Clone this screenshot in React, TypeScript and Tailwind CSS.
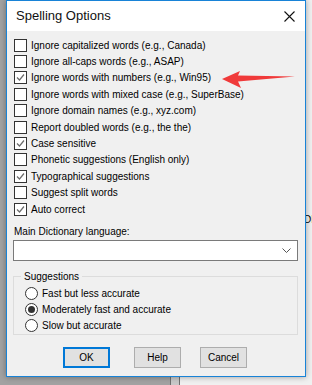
import React from "react";

const options: [string, boolean][] = [
  ["Ignore capitalized words (e.g., Canada)", false],
  ["Ignore all-caps words (e.g., ASAP)", false],
  ["Ignore words with numbers (e.g., Win95)", true],
  ["Ignore words with mixed case (e.g., SuperBase)", false],
  ["Ignore domain names (e.g., xyz.com)", false],
  ["Report doubled words (e.g., the the)", false],
  ["Case sensitive", true],
  ["Phonetic suggestions (English only)", false],
  ["Typographical suggestions", true],
  ["Suggest split words", false],
  ["Auto correct", true],
];

const radios: [string, boolean][] = [
  ["Fast but less accurate", false],
  ["Moderately fast and accurate", true],
  ["Slow but accurate", false],
];

function CheckBox({ checked }: { checked: boolean }) {
  return (
    <div className="w-[13px] h-[13px] border border-[#333] bg-white flex items-center justify-center shrink-0">
      {checked && (
        <svg width="11" height="11" viewBox="0 0 11 11">
          <path d="M2 5.5 L4.5 8 L9 2.5" fill="none" stroke="#6b6b6b" strokeWidth="1.2" />
        </svg>
      )}
    </div>
  );
}

function Radio({ checked }: { checked: boolean }) {
  return (
    <div className="w-[13px] h-[13px] rounded-full border border-[#333] bg-white flex items-center justify-center shrink-0">
      {checked && <div className="w-[7px] h-[7px] rounded-full bg-[#333]" />}
    </div>
  );
}

export default function App() {
  return (
    <div
      className="relative w-[312px] h-[385px] overflow-hidden flex text-[10px] text-black"
      style={{ fontFamily: '"Liberation Sans", Arial, sans-serif' }}
    >
      {/* Desktop behind the window */}
      <div className="w-[170px] h-full bg-[#a2a2a2]" />
      <div className="w-[10px] h-full bg-[#c8c8c8] border-l border-r border-[#707070]" />
      <div className="flex-1 h-full bg-[#f0f0f0] relative">
        <div className="absolute left-[124px] top-[212px] text-[10px]">DI</div>
      </div>

      {/* Dialog window */}
      <div className="absolute left-[6px] top-0 w-[300px] h-[377px] border border-[#1883d7] bg-[#f0f0f0] shadow-[0_0_6px_rgba(0,0,0,0.35)] flex flex-col">
        {/* Title bar */}
        <div className="h-[30px] bg-white flex items-center justify-between pl-[9px] pr-[10px] shrink-0">
          <span className="text-[13px] text-[#111]">Spelling Options</span>
          <svg width="11" height="11" viewBox="0 0 11 11">
            <path d="M0.5 0.5 L10.5 10.5 M10.5 0.5 L0.5 10.5" stroke="#111" strokeWidth="1.1" />
          </svg>
        </div>

        {/* Body */}
        <div className="flex flex-col pl-[7px] pr-[7px] pt-[6px]">
          {options.map(([label, checked]) => (
            <div key={label} className="h-[16.4px] flex items-center gap-[4px]">
              <CheckBox checked={checked} />
              <span className="whitespace-nowrap">{label}</span>
            </div>
          ))}

          <div className="mt-[8px] leading-[13px]">Main Dictionary language:</div>
          <div className="mt-[2px] -ml-[1px] w-[285px] h-[21px] bg-white border border-[#7a7a7a] flex items-center justify-end pr-[6px]">
            <svg width="9" height="6" viewBox="0 0 9 6">
              <path d="M0.5 0.5 L4.5 4.5 L8.5 0.5" fill="none" stroke="#555" strokeWidth="1" />
            </svg>
          </div>

          {/* Suggestions group */}
          <div className="relative mt-[15px] -ml-[1px] w-[285px] h-[59px] border border-[#dcdcdc] pt-[8px] pl-[11px] flex flex-col">
            <span className="absolute -top-[7px] left-[7px] bg-[#f0f0f0] px-[3px] leading-[13px]">Suggestions</span>
            {radios.map(([label, checked]) => (
              <div key={label} className="h-[16px] flex items-center gap-[4px]">
                <Radio checked={checked} />
                <span className="whitespace-nowrap">{label}</span>
              </div>
            ))}
          </div>

          {/* Buttons */}
          <div className="mt-[12px] flex pl-[49px] gap-[25px]">
            <button className="w-[47px] h-[21px] bg-[#e1e1e1] border-2 border-[#0078d7] text-[10px]">OK</button>
            <button className="w-[47px] h-[21px] bg-[#e1e1e1] border border-[#adadad] text-[10px] -ml-[1px]">Help</button>
            <button className="w-[47px] h-[21px] bg-[#e1e1e1] border border-[#adadad] text-[10px] -ml-[6px]">Cancel</button>
          </div>
        </div>
      </div>

      {/* Red annotation arrow */}
      <svg className="absolute left-0 top-0 pointer-events-none" width="312" height="385">
        <polygon points="222,79 240,71 238,75.5 295,76.5 238,81.5 241,88" fill="#f03a3a" />
      </svg>
    </div>
  );
}
